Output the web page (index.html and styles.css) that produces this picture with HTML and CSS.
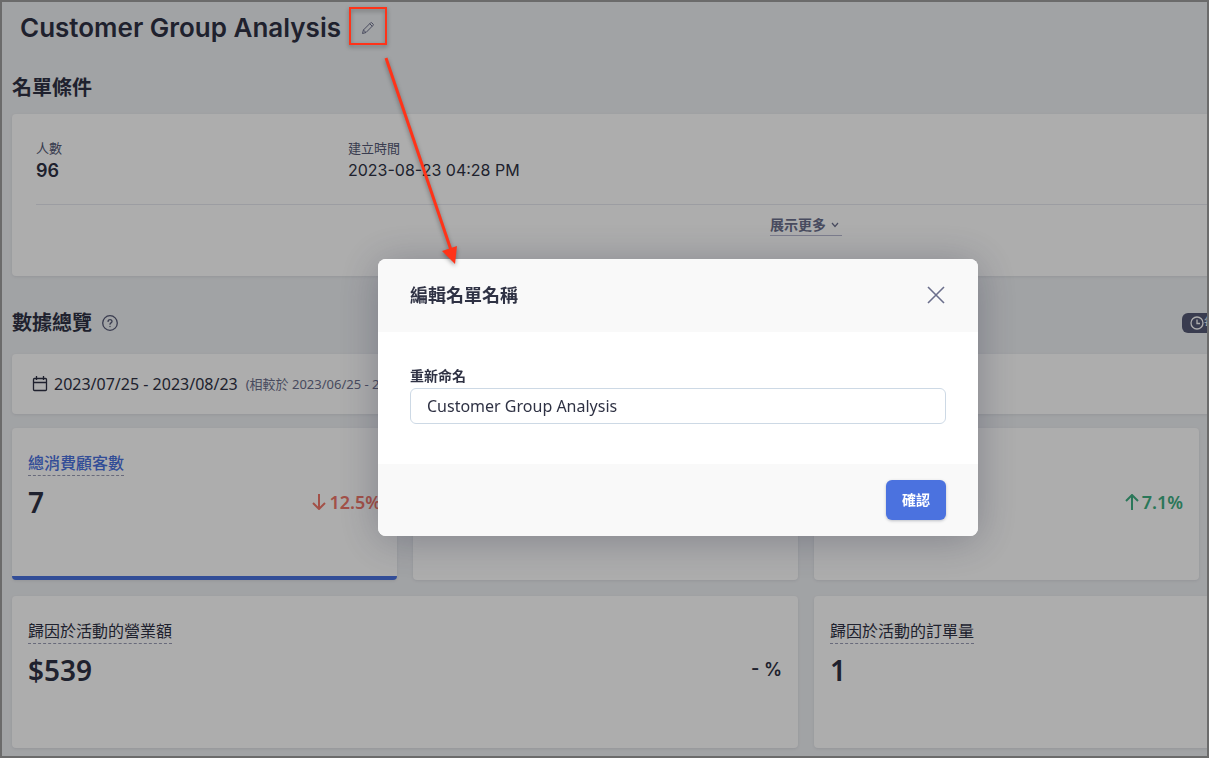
FILE: index.html
```html
<!DOCTYPE html>
<html lang="zh-Hant">
<head>
    <meta charset="UTF-8">
    <meta name="viewport" content="width=device-width, initial-scale=1.0">
    <title>Customer Group Analysis</title>
    <link rel="stylesheet" href="styles.css">
</head>
<body>
    <main class="page">
        <div class="page-title">
            <h1>Customer Group Analysis</h1>
            <button class="edit-button" type="button" aria-label="編輯">
                <svg width="14" height="14" viewBox="0 0 14 14" fill="none" stroke="currentColor" stroke-linejoin="round">
                    <path d="M1.5 12.5l.9-3.5 7.2-7.2q.6-.6 1.2 0l1.3 1.3q.6.6 0 1.2L5 11.5zM8.7 2.7l2.6 2.6M2.4 9L5 11.5"/>
                </svg>
            </button>
        </div>

        <h2>名單條件</h2>
        <section class="card conditions">
            <div class="condition-grid">
                <div>
                    <div class="label">人數</div>
                    <div class="count">96</div>
                </div>
                <div>
                    <div class="label">建立時間</div>
                    <div class="time">2023-08-23 04:28 PM</div>
                </div>
            </div>
            <div class="more-row">
                <button class="more-button" type="button">展示更多
                    <svg width="10" height="6" viewBox="0 0 10 6" fill="none" stroke="currentColor" stroke-width="1.2"><path d="M2 1l3 3.5L8 1"/></svg>
                </button>
            </div>
        </section>

        <div class="overview-header">
            <h2>數據總覽</h2>
            <svg width="16" height="16" viewBox="0 0 16 16" fill="none" stroke="currentColor" stroke-width="1.3" stroke-linecap="round">
                <circle cx="8" cy="8" r="7.3"/>
                <path d="M6.1 6.4c0-2.5 3.9-2.4 3.9 0 0 1.4-2 1.5-2 2.8M8 11.3v.2"/>
            </svg>
            <div class="badge">
                <svg width="14" height="14" viewBox="0 0 14 14" fill="none" stroke="currentColor" stroke-width="1.3"><circle cx="7" cy="7" r="6"/><path d="M7 3.5V7.5h3"/></svg>
                <span>每日更新</span>
            </div>
        </div>

        <section class="card date-bar">
            <svg width="16" height="16" viewBox="0 0 16 16" fill="none" stroke="currentColor" stroke-width="1.3">
                <rect x="1.5" y="2.5" width="13" height="12" rx="1"/>
                <path d="M1.5 6.5h13M4.5 0v4M11.5 0v4"/>
            </svg>
            <span class="range">2023/07/25 - 2023/08/23</span>
            <span class="compare">(相較於 2023/06/25 - 2023/07/24)</span>
        </section>

        <section class="metrics">
            <article class="card metric active">
                <h3>總消費顧客數</h3>
                <div class="metric-row">
                    <strong>7</strong>
                    <span class="change down">
                        <svg width="14" height="16" viewBox="0 0 14 16" fill="none" stroke="currentColor" stroke-width="2"><path d="M7 0v15M1 9l6 6 6-6"/></svg>
                        12.5%
                    </span>
                </div>
            </article>
            <article class="card metric"></article>
            <article class="card metric">
                <div class="metric-row only-change">
                    <span class="change up">
                        <svg width="14" height="16" viewBox="0 0 14 16" fill="none" stroke="currentColor" stroke-width="2"><path d="M7 16V1M1 7l6-6 6 6"/></svg>
                        7.1%
                    </span>
                </div>
            </article>
            <article class="card metric"></article>
            <article class="card metric wide">
                <h3>歸因於活動的營業額</h3>
                <div class="metric-row">
                    <strong>$539</strong>
                    <span class="change none">- %</span>
                </div>
            </article>
            <article class="card metric wide">
                <h3>歸因於活動的訂單量</h3>
                <div class="metric-row">
                    <strong>1</strong>
                </div>
            </article>
        </section>
    </main>

    <div class="overlay">
        <form class="modal" role="dialog" aria-labelledby="modal-title">
            <header class="modal-header">
                <h2 id="modal-title">編輯名單名稱</h2>
                <button class="close-button" type="button" aria-label="關閉">
                    <svg width="20" height="20" viewBox="0 0 20 20" fill="none" stroke="currentColor" stroke-width="1.6"><path d="M2 2l16 16M18 2L2 18"/></svg>
                </button>
            </header>
            <div class="modal-body">
                <label for="list-name">重新命名</label>
                <input id="list-name" type="text" value="Customer Group Analysis">
            </div>
            <footer class="modal-footer">
                <button class="confirm-button" type="button">確認</button>
            </footer>
        </form>
    </div>

    <svg class="annotation" width="130" height="270" viewBox="0 0 130 270" aria-hidden="true">
        <rect x="10" y="8" width="36" height="36" fill="none" stroke="#ff3319" stroke-width="2"/>
        <path d="M46 58L111 250" stroke="#ff3319" stroke-width="3"/>
        <path d="M102 251l15-5-2 18z" fill="#ff3319"/>
    </svg>
    <div class="frame"></div>
</body>
</html>
```

FILE: styles.css
```css
* {
    margin: 0;
    padding: 0;
    box-sizing: border-box;
}

body {
    font-family: 'Noto Sans', 'Noto Sans CJK TC', sans-serif;
    font-size: 16px;
    line-height: 24px;
    color: #2f3244;
    background: #eef0f3;
    height: 100vh;
    overflow: hidden;
}

button,
input {
    font: inherit;
    color: inherit;
    border: none;
    background: none;
}

button {
    cursor: pointer;
}

svg {
    flex: none;
}

h2 {
    font-size: 20px;
    font-weight: 700;
    line-height: 32px;
}

/* the report is wider than the window and runs off to the right */
.page {
    min-width: 1612px;
    padding: 8px 12px;
}

.page-title {
    display: flex;
    align-items: center;
    gap: 8px;
    padding-left: 8px;
    margin-bottom: 24px;
}

.page-title h1 {
    font-family: Inter, sans-serif;
    font-size: 26px;
    font-weight: 600;
    line-height: 40px;
}

.edit-button {
    display: flex;
    padding: 12px;
    color: #6b6f8c;
}

.card {
    background: #fff;
    border-radius: 4px;
    box-shadow: 0 1px 3px rgba(50, 55, 80, 0.1);
}

.conditions {
    margin-top: 10px;
    padding: 24px;
    height: 162px;
}

.condition-grid {
    display: grid;
    grid-template-columns: repeat(5, 1fr);
    gap: 20px;
    padding-bottom: 20px;
    border-bottom: 1px solid #e6e7ef;
}

.label {
    font-size: 13px;
    line-height: 20px;
    color: #555975;
}

.count,
.time {
    font-family: Inter, sans-serif;
}

.count {
    font-size: 18px;
    font-weight: 600;
    line-height: 26px;
}

.more-row {
    display: flex;
    justify-content: center;
    padding-top: 10px;
}

.more-button {
    display: flex;
    align-items: center;
    gap: 4px;
    padding-right: 2px;
    font-size: 14px;
    font-weight: 700;
    line-height: 20px;
    color: #6b6f8c;
    border-bottom: 1px solid #b8bad0;
}

.overview-header {
    display: flex;
    align-items: center;
    gap: 10px;
    margin: 31px 0 15px;
    color: #555975;
}

.overview-header h2 {
    color: #2f3244;
}

.badge {
    display: flex;
    align-items: center;
    flex: 0 0 418px;
    margin-left: auto;
    padding-left: 8px;
    border-radius: 6px;
    font-size: 12px;
    line-height: 20px;
    color: #fff;
    background: #555975;
}

.date-bar {
    display: flex;
    align-items: center;
    height: 60px;
    padding: 0 20px;
}

.range {
    margin: 0 8px 0 6px;
}

.compare {
    font-size: 13px;
    color: #6b6f8c;
}

.metrics {
    display: grid;
    grid-template-columns: repeat(4, 1fr);
    gap: 16px;
    margin-top: 14px;
}

.metric {
    height: 152px;
    padding: 24px 16px;
}

.metric.active {
    border-bottom: 4px solid #4b72df;
}

.metric.active h3 {
    color: #4b72df;
    font-weight: 500;
}

.metric.wide {
    grid-column: span 2;
}

.metric h3 {
    width: fit-content;
    font-size: 16px;
    font-weight: 400;
    line-height: 23px;
    border-bottom: 1px dashed #9a9db5;
}

.metric-row {
    display: flex;
    align-items: center;
    justify-content: space-between;
    margin-top: 6px;
    line-height: 40px;
}

.metric-row strong {
    font-size: 28px;
    font-weight: 600;
}

.only-change {
    justify-content: flex-end;
    margin-top: 30px;
}

.change {
    display: flex;
    align-items: center;
    gap: 3px;
    font-size: 18px;
    font-weight: 600;
}

.down {
    color: #f0776a;
}

.up {
    color: #3fb083;
}

.none {
    font-family: Inter, sans-serif;
}

.overlay {
    position: fixed;
    inset: 0;
    display: flex;
    justify-content: center;
    align-items: center;
    padding: 37px 0 0 147px;
    background: rgba(0, 0, 0, 0.32);
}

.modal {
    width: 600px;
    border-radius: 8px;
    overflow: hidden;
    background: #fff;
    box-shadow: 0 4px 40px rgba(30, 32, 60, 0.3);
}

.modal-header,
.modal-footer {
    display: flex;
    align-items: center;
    padding: 16px 32px;
    background: #f9f9f9;
}

.modal-header {
    justify-content: space-between;
    height: 73px;
    padding-bottom: 17px;
}

.modal-header h2 {
    font-size: 18px;
}

.close-button {
    display: flex;
    color: #6b6f8c;
}

.modal-body {
    padding: 32px 32px 40px;
}

.modal-body label {
    display: block;
    font-size: 14px;
    font-weight: 700;
}

.modal-body input {
    display: block;
    width: 100%;
    height: 36px;
    padding: 0 16px;
    border: 1px solid #cdd9e5;
    border-radius: 6px;
}

.modal-footer {
    justify-content: flex-end;
}

.confirm-button {
    padding: 8px 16px;
    border-radius: 6px;
    font-size: 14px;
    font-weight: 700;
    color: #fff;
    background: #4b72df;
    box-shadow: 0 1px 3px rgba(50, 55, 80, 0.3);
}

.annotation {
    position: absolute;
    top: 0;
    left: 340px;
    filter: drop-shadow(0 2px 2px rgba(0, 0, 0, 0.35));
    pointer-events: none;
}

.frame {
    position: fixed;
    inset: 0;
    border: 2px solid #6b6b6b;
    pointer-events: none;
}
```
